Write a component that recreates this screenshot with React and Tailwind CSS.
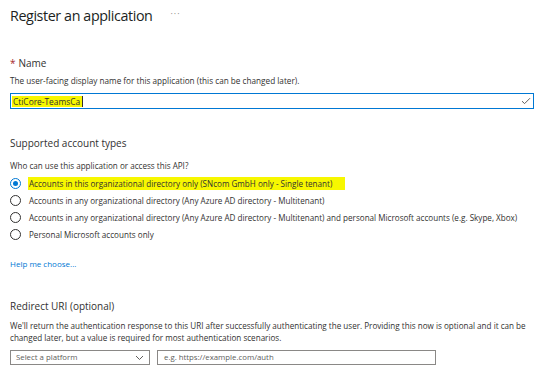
import React from "react";

const Radio = ({ checked, children, highlight }) => (
  <label className="flex items-center h-[17px]">
    <span
      className={
        "flex items-center justify-center w-[11px] h-[11px] rounded-full border " +
        (checked ? "border-[#0078d4]" : "border-[#323130]")
      }
    >
      {checked && <span className="block w-[5px] h-[5px] rounded-full bg-[#0078d4]" />}
    </span>
    <span
      className={
        "ml-[7px] text-[8.1px] leading-[13px] px-[1px] " +
        (highlight ? "bg-[#f7f700] pr-[13px]" : "")
      }
    >
      {children}
    </span>
  </label>
);

const App = () => {
  return (
    <div
      className="w-[546px] h-[376px] bg-white text-[#323130] px-[10px] pt-[3px] overflow-hidden"
      style={{ fontFamily: '"Open Sans", "Noto Sans", sans-serif' }}
    >
      <div className="flex items-center h-[26px]">
        <h1 className="text-[14.3px] tracking-[-0.4px] font-normal text-[#201f1e]">
          Register an application
        </h1>
        <span className="ml-[18px] text-[9px] text-[#8a8886] tracking-[1px] -mt-[4px]">···</span>
      </div>

      <div className="mt-[27px] text-[10px] leading-[14px]">
        <span className="text-[#a4262c] mr-[3px]">*</span>Name
      </div>
      <p className="mt-[5px] text-[8.2px] leading-[11px]">
        The user-facing display name for this application (this can be changed later).
      </p>
      <div className="mt-[7px] w-[524px] h-[16px] border-[1.5px] border-[#0078d4] flex items-center px-[1px]">
        <span className="bg-[#f7f700] text-[8.4px] leading-[11px] px-[1px] pr-[2px] border-r border-[#323130]">
          CtiCore-TeamsCa
        </span>
        <svg className="ml-auto mr-[1px]" width="10" height="8" viewBox="0 0 10 8">
          <path d="M1 4.2 L3.6 6.6 L9 1.2" fill="none" stroke="#605e5c" strokeWidth="1" />
        </svg>
      </div>

      <div className="mt-[27px] text-[10px] leading-[15px]">Supported account types</div>
      <p className="mt-[9px] text-[8.1px] leading-[11px]">
        Who can use this application or access this API?
      </p>
      <div className="mt-[4px] flex flex-col">
        <Radio checked highlight>
          Accounts in this organizational directory only (SNcom GmbH only - Single tenant)
        </Radio>
        <Radio>Accounts in any organizational directory (Any Azure AD directory - Multitenant)</Radio>
        <Radio>
          Accounts in any organizational directory (Any Azure AD directory - Multitenant) and
          personal Microsoft accounts (e.g. Skype, Xbox)
        </Radio>
        <Radio>Personal Microsoft accounts only</Radio>
      </div>
      <a className="block mt-[15px] text-[8px] leading-[11px] text-[#0078d4]">Help me choose...</a>

      <div className="mt-[30px] text-[10px] leading-[15px]">Redirect URI (optional)</div>
      <p className="mt-[6px] text-[8.1px] leading-[12px]">
        We'll return the authentication response to this URI after successfully authenticating
        the user. Providing this now is optional and it can be
        <br />
        changed later, but a value is required for most authentication scenarios.
      </p>
      <div className="mt-[6px] flex gap-[7px]">
        <div className="w-[140px] h-[15px] border border-[#8a8886] flex items-center pl-[5px] pr-[5px]">
          <span className="text-[7.8px] text-[#605e5c]">Select a platform</span>
          <svg className="ml-auto" width="9" height="6" viewBox="0 0 9 6">
            <path d="M1 1 L4.5 4.5 L8 1" fill="none" stroke="#605e5c" strokeWidth="1" />
          </svg>
        </div>
        <div className="w-[279px] h-[15px] border border-[#8a8886] flex items-center pl-[6px]">
          <span className="text-[7.8px] text-[#605e5c]">e.g. https://example.com/auth</span>
        </div>
      </div>
    </div>
  );
};

export default App;
